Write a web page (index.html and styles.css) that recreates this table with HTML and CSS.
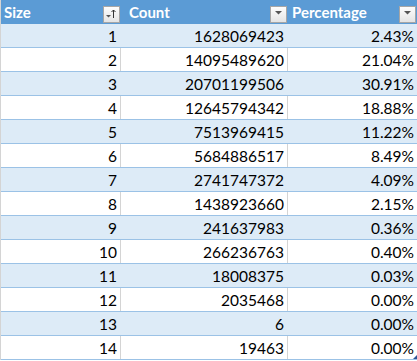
FILE: index.html
```html
<!DOCTYPE html>
<html lang="en">
  <head>
    <meta charset="UTF-8" />
    <title>Size counts</title>
    <link rel="stylesheet" href="styles.css">
  </head>

  <body>
    <div class="table">
      <div class="row head">
        <div class="cell head-cell size-col">
          <span>Size</span>
          <button class="filter-btn" title="Sorted ascending">
            <svg width="15" height="15" viewBox="0 0 15 15">
              <polygon points="2,8 7,8 4.5,10.5" fill="#555" />
              <line x1="9.5" y1="3" x2="9.5" y2="11" stroke="#333" stroke-width="1" />
              <polyline points="7.5,5 9.5,3 11.5,5" fill="none" stroke="#333" stroke-width="1" />
            </svg>
          </button>
        </div>
        <div class="cell head-cell count-col">
          <span>Count</span>
          <button class="filter-btn">
            <svg width="15" height="15" viewBox="0 0 15 15">
              <polygon points="4,4 11,4 7.5,7.5" fill="#555" />
            </svg>
          </button>
        </div>
        <div class="cell head-cell pct-col">
          <span>Percentage</span>
          <button class="filter-btn">
            <svg width="15" height="15" viewBox="0 0 15 15">
              <polygon points="4,4 11,4 7.5,7.5" fill="#555" />
            </svg>
          </button>
        </div>
      </div>

      <div class="row band"><div class="cell">1</div><div class="cell">1628069423</div><div class="cell">2.43%</div></div>
      <div class="row"><div class="cell">2</div><div class="cell">14095489620</div><div class="cell">21.04%</div></div>
      <div class="row band"><div class="cell">3</div><div class="cell">20701199506</div><div class="cell">30.91%</div></div>
      <div class="row"><div class="cell">4</div><div class="cell">12645794342</div><div class="cell">18.88%</div></div>
      <div class="row band"><div class="cell">5</div><div class="cell">7513969415</div><div class="cell">11.22%</div></div>
      <div class="row"><div class="cell">6</div><div class="cell">5684886517</div><div class="cell">8.49%</div></div>
      <div class="row band"><div class="cell">7</div><div class="cell">2741747372</div><div class="cell">4.09%</div></div>
      <div class="row"><div class="cell">8</div><div class="cell">1438923660</div><div class="cell">2.15%</div></div>
      <div class="row band"><div class="cell">9</div><div class="cell">241637983</div><div class="cell">0.36%</div></div>
      <div class="row"><div class="cell">10</div><div class="cell">266236763</div><div class="cell">0.40%</div></div>
      <div class="row band"><div class="cell">11</div><div class="cell">18008375</div><div class="cell">0.03%</div></div>
      <div class="row"><div class="cell">12</div><div class="cell">2035468</div><div class="cell">0.00%</div></div>
      <div class="row band"><div class="cell">13</div><div class="cell">6</div><div class="cell">0.00%</div></div>
      <div class="row last"><div class="cell">14</div><div class="cell">19463</div><div class="cell">0.00%</div></div>
    </div>
  </body>
</html>
```

FILE: styles.css
```css
body {
  margin: 0;
  background-color: #fff;
  font-family: Lato, "Open Sans", sans-serif;
  color: #000;
}

.table {
  width: 416px;
  border-left: 1px solid #d4d4d4;
}

.row {
  display: grid;
  grid-template-columns: 120px 167px 1fr;
  height: 24px;
  box-sizing: border-box;
  border-bottom: 1px solid #9bc2e6;
}

.row .cell {
  font-size: 15.5px;
  line-height: 23px;
  padding-top: 1px;
  padding-right: 3px;
  text-align: right;
  box-sizing: border-box;
  height: 23px;
  overflow: hidden;
  white-space: nowrap;
}

/* white rows show the sheet gridlines */
.row .cell:nth-child(1),
.row .cell:nth-child(2) {
  border-right: 1px solid #d4d4d4;
}

.row.band {
  background-color: #ddebf7;
}

.row.band .cell {
  border-right-color: #ddebf7;
}

.row.last .cell:last-child {
  position: relative;
}

.row.last .cell:last-child::after {
  content: "";
  position: absolute;
  right: 0;
  bottom: 0;
  border-left: 4px solid transparent;
  border-bottom: 4px solid #2f5597;
}

.row.head {
  background-color: #5b9bd5;
  border-bottom: none;
}

.row.head .head-cell {
  display: flex;
  justify-content: space-between;
  align-items: flex-start;
  height: 24px;
  padding-top: 0;
  padding-right: 1px;
  border-right: none;
  font-size: 15px;
  font-weight: bold;
  line-height: 24px;
  color: #fff;
  text-align: left;
}

.size-col {
  padding-left: 3px;
}

.count-col {
  padding-left: 8px;
}

.pct-col {
  padding-left: 4px;
}

.filter-btn {
  width: 17px;
  height: 17px;
  margin-top: 6px;
  padding: 0 0 0 0;
  box-sizing: border-box;
  border: 1px solid #a6a6a6;
  background: linear-gradient(#fdfdfd, #e4e4e4);
  display: flex;
  align-items: flex-start;
  justify-content: flex-start;
  cursor: pointer;
}

.filter-btn svg {
  display: block;
}
```
